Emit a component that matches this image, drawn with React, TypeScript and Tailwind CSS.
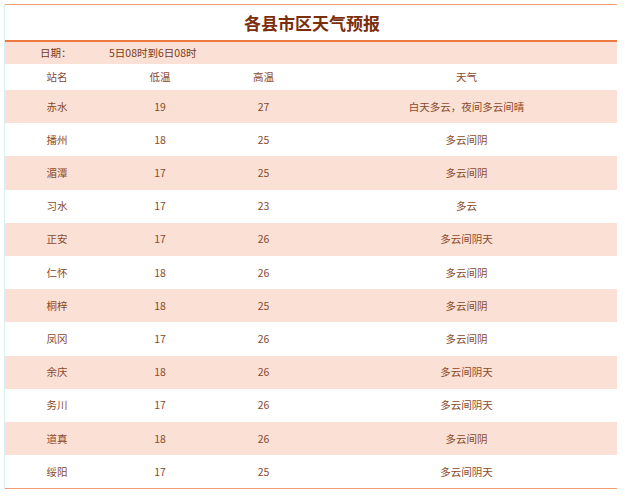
const rows: [string, string, string, string][] = [
  ["赤水", "19", "27", "白天多云，夜间多云间晴"],
  ["播州", "18", "25", "多云间阴"],
  ["湄潭", "17", "25", "多云间阴"],
  ["习水", "17", "23", "多云"],
  ["正安", "17", "26", "多云间阴天"],
  ["仁怀", "18", "26", "多云间阴"],
  ["桐梓", "18", "25", "多云间阴"],
  ["凤冈", "17", "26", "多云间阴"],
  ["余庆", "18", "26", "多云间阴天"],
  ["务川", "17", "26", "多云间阴天"],
  ["道真", "18", "26", "多云间阴"],
  ["绥阳", "17", "25", "多云间阴天"],
];

export default function App() {
  return (
    <div
      className="w-[625px] h-[500px] bg-white pt-[4px] pl-[4px]"
      style={{ fontFamily: '"Noto Sans CJK SC", "Noto Sans", sans-serif' }}
    >
      <div className="w-[613px] border-l border-[#d6f0f2]">
        <div className="border-t-[1.5px] border-[#f0a070] h-[38px] flex items-center justify-center border-b-2 border-b-[#ec7a40]">
          <span className="text-[17px] font-bold text-[#7a2e0c] pl-[2px]">各县市区天气预报</span>
        </div>
        <div className="h-[22px] bg-[#fbe1d5] flex items-center text-[10.5px] text-[#7a3a1c]">
          <span className="w-[104px] pl-[35px]">日期：</span>
          <span>5日08时到6日08时</span>
        </div>
        <div className="grid grid-cols-[104px_102px_105px_1fr] h-[26px] items-center text-center text-[10.5px] text-[#8a4a2c]">
          <span>站名</span>
          <span>低温</span>
          <span>高温</span>
          <span>天气</span>
        </div>
        {rows.map((r, i) => (
          <div
            key={r[0]}
            className={`grid grid-cols-[104px_102px_105px_1fr] h-[33.2px] items-center text-center text-[10.5px] text-[#8a4a2c] ${
              i % 2 === 0 ? "bg-[#fbe1d5]" : "bg-white"
            }`}
          >
            <span>{r[0]}</span>
            <span>{r[1]}</span>
            <span>{r[2]}</span>
            <span>{r[3]}</span>
          </div>
        ))}
        <div className="border-t-[1.5px] border-[#f0a070]" />
      </div>
    </div>
  );
}
